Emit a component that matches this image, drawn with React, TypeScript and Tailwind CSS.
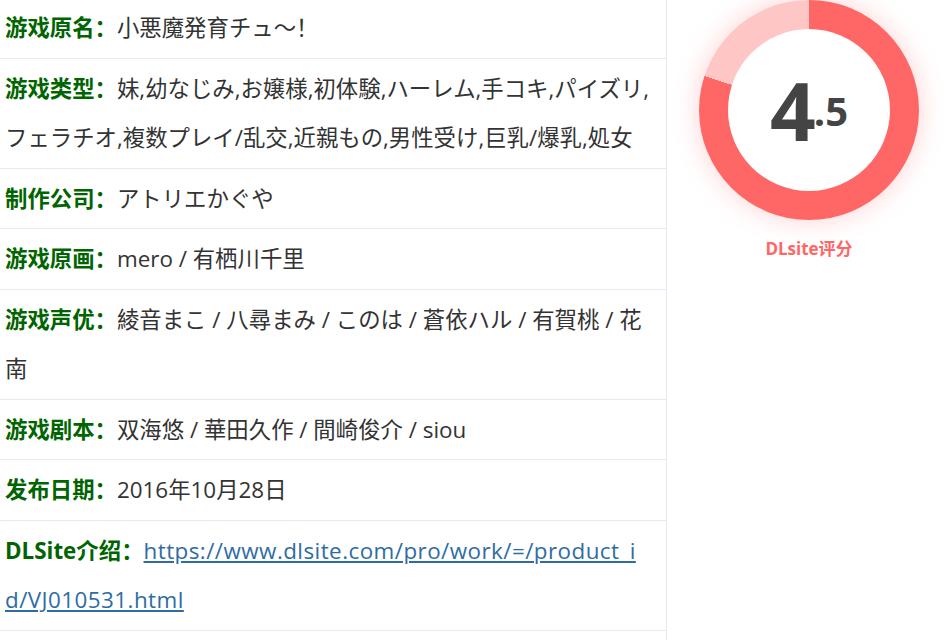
import React from "react";

const rows: { label: string; value: string; link?: boolean }[] = [
  { label: "游戏原名", value: "小悪魔発育チュ～！" },
  {
    label: "游戏类型",
    value:
      "妹,幼なじみ,お嬢様,初体験,ハーレム,手コキ,パイズリ,フェラチオ,複数プレイ/乱交,近親もの,男性受け,巨乳/爆乳,処女",
  },
  { label: "制作公司", value: "アトリエかぐや" },
  { label: "游戏原画", value: "mero / 有栖川千里" },
  {
    label: "游戏声优",
    value: "綾音まこ / 八尋まみ / このは / 蒼依ハル / 有賀桃 / 花南",
  },
  { label: "游戏剧本", value: "双海悠 / 華田久作 / 間崎俊介 / siou" },
  { label: "发布日期", value: "2016年10月28日" },
  {
    label: "DLSite介绍",
    value: "https://www.dlsite.com/pro/work/=/product_id/VJ010531.html",
    link: true,
  },
];

const ScoreRing = () => {
  return (
    <div className="flex flex-col items-center">
      <div className="w-[220px] h-[220px] rounded-full bg-[conic-gradient(#ff6666_0deg_288deg,#ffc6c6_288deg_360deg)] shadow-[0_0_26px_rgba(255,102,102,0.3)] flex items-center justify-center">
        <div className="w-[162px] h-[162px] rounded-full bg-white flex items-center justify-center">
          <span className="text-[#444] font-bold leading-none flex items-center">
            <span className="text-[80px]">4</span>
            <span className="text-[40px] -ml-[2px] mt-[2px]">.5</span>
          </span>
        </div>
      </div>
      <div className="mt-[16px] text-[17px] font-bold text-[#ff6666]">DLsite评分</div>
    </div>
  );
};

export default function App() {
  return (
    <div className="w-[951px] h-[640px] overflow-hidden bg-white font-['Open_Sans','Noto_Sans_CJK_SC','Noto_Sans_CJK_JP',sans-serif]">
      <div className="flex h-full">
        <div className="w-[667px] shrink-0 border-r border-[#e3ecf4] -mt-[2px]">
          {rows.map((r) => (
            <div
              key={r.label}
              className="border-b border-[#e3ecf4] py-[5px] pl-[5px] pr-[6px] text-[22.4px] leading-[49.5px] text-[#333]"
            >
              <span className="font-bold text-[#006400]">{r.label}：</span>
              {r.link ? (
                <a href="#" className="text-[#2e6da4] underline tracking-[0.45px]">
                  {r.value.slice(0, 43)}
                  <br />
                  {r.value.slice(43)}
                </a>
              ) : (
                <span>{r.value}</span>
              )}
            </div>
          ))}
          <div className="py-[5px] pl-[5px] text-[22px] leading-[49.5px]">&nbsp;</div>
        </div>
        <div className="flex-1 flex justify-center">
          <ScoreRing />
        </div>
      </div>
    </div>
  );
}
